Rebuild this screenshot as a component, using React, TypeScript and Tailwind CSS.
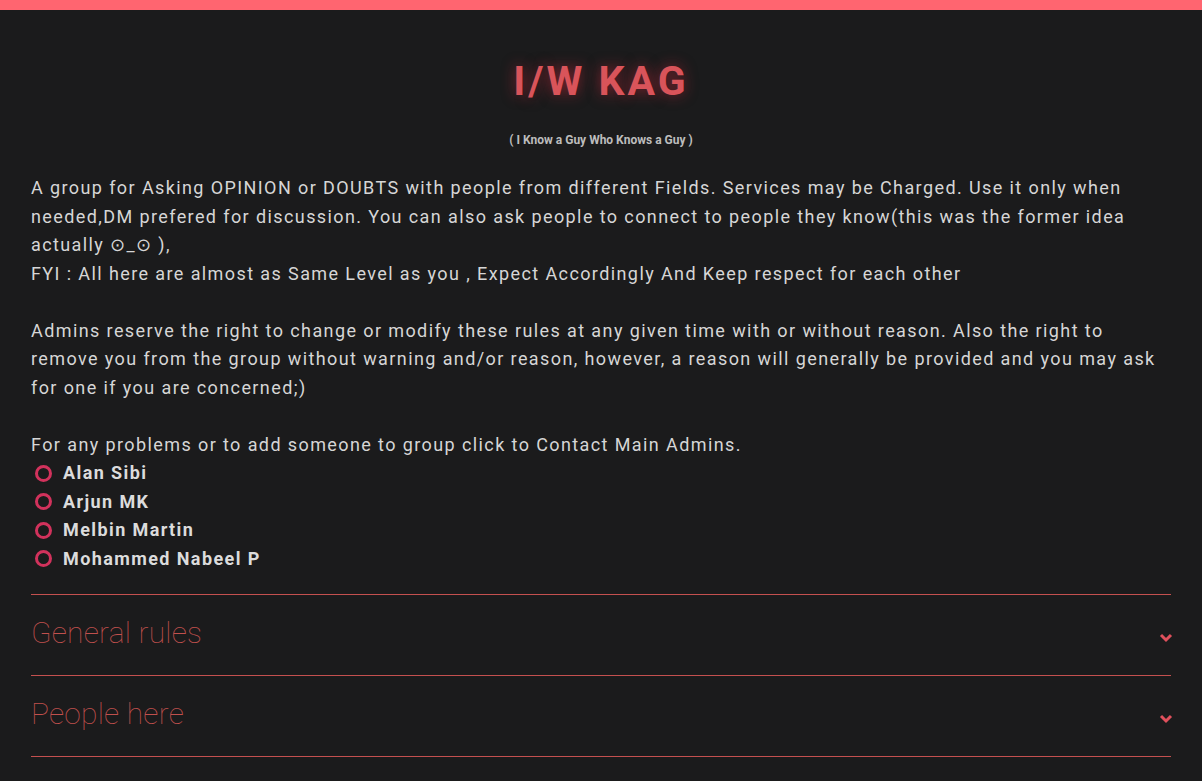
import React from "react";

const Ring = () => (
  <span className="inline-block w-[17px] h-[17px] rounded-full border-[3px] border-[#d2325c] mr-[11px] ml-[4px] shrink-0" />
);

const Chevron = () => (
  <svg width="14" height="10" viewBox="0 0 14 10" className="shrink-0">
    <path d="M2 2 L7 7 L12 2" fill="none" stroke="#e0505c" strokeWidth="3" />
  </svg>
);

const Rule = () => <div className="h-px bg-[#c4504f]" />;

export default function App() {
  const names = ["Alan Sibi", "Arjun MK", "Melbin Martin", "Mohammed Nabeel P"];
  return (
    <div className="min-h-[781px] bg-[#1b1b1c] font-['Roboto',sans-serif]">
      <div className="h-[10px] bg-[#ff6570]" />
      <div className="px-[31px]">
        <h1 className="text-center pt-[47px] text-[41px] leading-[48px] font-bold tracking-[3px] text-[#d9545a] [text-shadow:0_0_14px_rgba(220,40,60,0.55)]">
          I/W KAG
        </h1>
        <p className="text-center mt-[28px] text-[12px] font-bold text-[#bdbdbd] leading-[14px]">
          ( I Know a Guy Who Knows a Guy )
        </p>
        <div className="mt-[27px] text-[18px] leading-[28.5px] tracking-[1.4px] text-[#d6d6d6]">
          <p>
            A group for Asking OPINION or DOUBTS with people from different Fields. Services may be Charged. Use it only when needed,DM prefered for discussion. You can also ask people to connect to people they know(this was the former idea actually ⊙_⊙ ),
            <br />
            FYI : All here are almost as Same Level as you , Expect Accordingly And Keep respect for each other
            <br />
            <br />
            Admins reserve the right to change or modify these rules at any given time with or without reason. Also the right to remove you from the group without warning and/or reason, however, a reason will generally be provided and you may ask for one if you are concerned;)
            <br />
            <br />
            For any problems or to add someone to group click to Contact Main Admins.
          </p>
          <ul>
            {names.map((n) => (
              <li key={n} className="flex items-center font-bold text-[#dcdcdc] tracking-[1.4px]">
                <Ring />
                {n}
              </li>
            ))}
          </ul>
        </div>
        <div className="mt-[21px]">
          <Rule />
          {["General rules", "People here"].map((t) => (
            <div key={t}>
              <div className="flex items-center justify-between h-[80px]">
                <span className="text-[30px] font-thin text-[#c0504d] tracking-[0.2px] mb-[6px]">{t}</span>
                <span className="mr-[-2px] mt-[6px]"><Chevron /></span>
              </div>
              <Rule />
            </div>
          ))}
        </div>
      </div>
    </div>
  );
}
